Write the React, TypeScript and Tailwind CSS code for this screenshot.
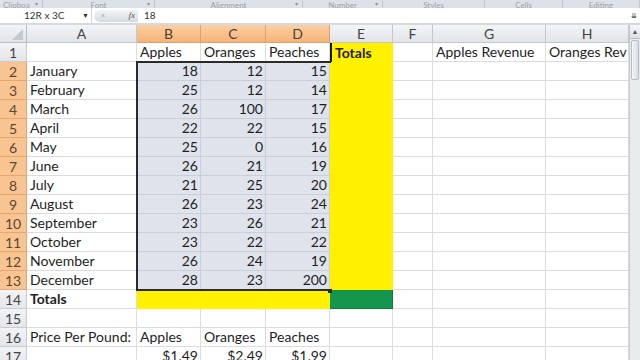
import React from "react";

const colW = [27, 110, 64, 65, 64, 63, 40, 113, 83];
const colLetters = ["", "A", "B", "C", "D", "E", "F", "G", "H"];

const months = ["January","February","March","April","May","June","July","August","September","October","November","December"];
const B = [18,25,26,22,25,26,21,26,23,23,26,28];
const C = [12,12,100,22,0,21,25,23,26,22,24,23];
const D = [15,14,17,15,16,19,20,24,21,22,19,200];

type Cell = { t?: string; right?: boolean; bold?: boolean };

function getCell(r: number, c: number): Cell {
  // r: 1-based row, c: 1..8 (A..H)
  if (r === 1) {
    if (c === 2) return { t: "Apples" };
    if (c === 3) return { t: "Oranges" };
    if (c === 4) return { t: "Peaches" };
    if (c === 5) return { t: "Totals", bold: true };
    if (c === 7) return { t: "Apples Revenue" };
    if (c === 8) return { t: "Oranges Rev" };
  }
  if (r >= 2 && r <= 13) {
    const i = r - 2;
    if (c === 1) return { t: months[i] };
    if (c === 2) return { t: String(B[i]), right: true };
    if (c === 3) return { t: String(C[i]), right: true };
    if (c === 4) return { t: String(D[i]), right: true };
  }
  if (r === 14 && c === 1) return { t: "Totals", bold: true };
  if (r === 16) {
    if (c === 1) return { t: "Price Per Pound:" };
    if (c === 2) return { t: "Apples" };
    if (c === 3) return { t: "Oranges" };
    if (c === 4) return { t: "Peaches" };
  }
  if (r === 17) {
    if (c === 2) return { t: "$1.49", right: true };
    if (c === 3) return { t: "$2.49", right: true };
    if (c === 4) return { t: "$1.99", right: true };
  }
  return {};
}

function cellBg(r: number, c: number): string {
  if (c === 5 && r >= 1 && r <= 13) return "bg-[#fff100] border-r border-[#fff100]";
  if (c === 5 && r === 14) return "bg-[#14964c] border-r border-b border-[#0f7a3c]";
  if (r === 14 && c >= 2 && c <= 4) return "bg-[#fff100]";
  if (r >= 2 && r <= 13 && c >= 2 && c <= 4) return "bg-[#dfe4ec] border-r border-b border-[#c9ced8]";
  return "bg-white border-r border-b border-[#dadcdf]";
}

function Ribbon() {
  const groups = [
    { w: 43, label: "Clipboa", left: true },
    { w: 112, label: "Font" },
    { w: 148, label: "Alignment" },
    { w: 80, label: "Number" },
    { w: 102, label: "Styles", nol: true },
    { w: 78, label: "Cells", nol: true },
    { w: 77, label: "Editing", nol: true },
  ];
  return (
    <div className="flex h-[8px] bg-[#dde2e8] overflow-hidden">
      {groups.map((g, i) => (
        <div
          key={i}
          style={{ width: g.w }}
          className="relative flex h-[8px] items-end border-r border-[#c2c8d0]"
        >
          <div
            className={`flex-1 ${g.left ? "pl-[3px] text-left" : "text-center"} text-[8px] leading-[8px] text-[#9aa0a8] -mb-[1px]`}
          >
            {g.label}
          </div>
          {!g.nol && (
            <div className="absolute right-[2px] top-[1px] h-[6px] w-[5px] text-[6px] leading-[6px] text-[#8d939b]">▾</div>
          )}
        </div>
      ))}
    </div>
  );
}

function FormulaBar() {
  return (
    <div className="flex h-[15px] items-center bg-white text-[10px] text-[#333]">
      <div className="relative flex h-[15px] w-[92px] items-center border-r border-[#d0d4da]">
        <span className="ml-[24px] leading-[15px]">12R x 3C</span>
        <span className="absolute left-[82px] top-[0px] text-[7px] leading-[15px] text-[#333]">▼</span>
      </div>
      <div className="ml-[2px] flex h-[12px] w-[44px] items-center justify-between rounded-l-full rounded-r-[3px] bg-gradient-to-b from-[#f2f4f6] to-[#d6dbe1] px-[3px]">
        <span className="ml-[4px] text-[7px] text-[#9ca3ab]">×</span>
        <span className="text-[9px] italic text-[#555] font-['Liberation_Serif',serif]">fx</span>
      </div>
      <span className="ml-[6px] leading-[15px]">18</span>
      <div className="flex-1" />
      <div className="mr-[2px] flex h-[12px] w-[8px] items-center justify-center text-[7px] leading-[7px] text-[#333]">⇊</div>
    </div>
  );
}

function Sheet() {
  const rows = Array.from({ length: 17 }, (_, i) => i + 1);
  const orangeCols = new Set([2, 3, 4]);
  return (
    <div className="relative">
      {/* header row */}
      <div className="flex h-[18px]">
        {colW.map((w, c) => {
          if (c === 0) {
            return (
              <div key={c} style={{ width: w }} className="relative h-[18px] border-r border-b border-[#b8bec7] bg-gradient-to-b from-[#f3f4f6] to-[#e0e3e7]">
                <div className="absolute bottom-[2px] right-[2px] h-0 w-0 border-l-[11px] border-t-[11px] border-l-transparent border-t-transparent border-b-0 border-r-[0px]" />
                <svg className="absolute bottom-[2px] right-[3px]" width="11" height="11" viewBox="0 0 11 11">
                  <polygon points="11,0 11,11 0,11" fill="#c3c8ce" />
                </svg>
              </div>
            );
          }
          const orange = orangeCols.has(c);
          return (
            <div
              key={c}
              style={{ width: w }}
              className={`flex h-[18px] items-center justify-center border-r border-b text-[14px] ${
                orange
                  ? "bg-gradient-to-b from-[#fbd0a2] to-[#f6b37a] border-[#e2a066] text-[#4e4030]"
                  : "bg-gradient-to-b from-[#f4f5f7] to-[#e1e4e8] border-[#c3c8cf] text-[#444]"
              }`}
            >
              {colLetters[c]}
            </div>
          );
        })}
      </div>
      {rows.map((r) => (
        <div key={r} className="flex h-[19px]">
          {colW.map((w, c) => {
            if (c === 0) {
              const orange = r >= 2 && r <= 13;
              return (
                <div
                  key={c}
                  style={{ width: w }}
                  className={`flex h-[19px] items-center justify-center border-r border-b text-[14px] ${
                    orange
                      ? "bg-[#f8c592] border-[#e8a66c] text-[#5b4630]"
                      : "bg-gradient-to-b from-[#f2f3f5] to-[#e4e6ea] border-[#c8cdd3] text-[#444]"
                  }`}
                >
                  {r}
                </div>
              );
            }
            const cell = getCell(r, c);
            const extra = r === 1 && c === 5 ? "border-l-2 border-l-[#1a1a1a]" : "";
            return (
              <div
                key={c}
                style={{ width: w }}
                className={`flex h-[19px] items-end overflow-visible whitespace-nowrap ${cellBg(r, c)} ${extra} ${
                  cell.right ? "justify-end pr-[2px]" : "pl-[3px]"
                }`}
              >
                {cell.t && (
                  <span className={`text-[14px] leading-[18px] text-[#1e1e1e] ${cell.bold ? "font-bold" : ""}`}>
                    {cell.t}
                  </span>
                )}
              </div>
            );
          })}
        </div>
      ))}
      {/* selection outline B2:D13 */}
      <div className="pointer-events-none absolute left-[136px] top-[36px] h-[230px] w-[195px] border-l-2 border-t-2 border-b-2 border-[#2b2b2b]" />
      <div className="pointer-events-none absolute left-[328px] top-[264px] h-[4px] w-[4px] bg-[#2b2b2b]" />
    </div>
  );
}

export default function App() {
  return (
    <div className="h-[360px] w-[640px] overflow-hidden bg-white font-['Lato',sans-serif]">
      <Ribbon />
      <FormulaBar />
      <div className="h-[2px] bg-[#d5dae0]" />
      <div className="flex">
        <div className="w-[629px] overflow-hidden">
          <Sheet />
        </div>
        <div className="flex w-[11px] flex-col bg-[#e9ecef] border-l border-[#c5cad1]">
          <div className="flex h-[14px] items-center justify-center border-b border-[#b8bec6] bg-gradient-to-b from-[#f5f6f8] to-[#dde1e6] text-[7px] leading-[7px] text-[#555]">▲</div>
          <div className="mx-[1px] mt-[1px] h-[40px] rounded-[2px] border border-[#b5bcc5] bg-gradient-to-r from-[#f3f5f7] to-[#d9dde3]" />
        </div>
      </div>
    </div>
  );
}
